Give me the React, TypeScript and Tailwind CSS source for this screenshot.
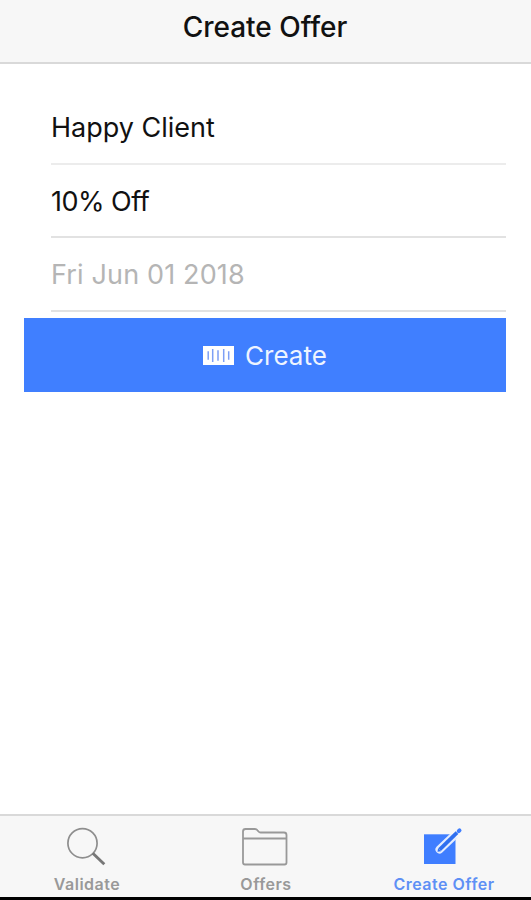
import type { ReactNode } from "react";
import clsx from "clsx";

type TabProps = {
  label: string;
  icon: ReactNode;
  active?: boolean;
  className?: string;
};

function SearchIcon() {
  return (
    <svg width="44" height="42" viewBox="0 0 44 42" fill="none">
      <circle cx="17.500" cy="18.200" r="14.600" stroke="#8e8e8e" strokeWidth="1.700" />
      <path d="M27.800 28.200l11.500 11" stroke="#777" strokeWidth="2.900" />
    </svg>
  );
}

function FolderIcon() {
  return (
    <svg
      width="50"
      height="42"
      viewBox="0 0 50 42"
      fill="none"
      stroke="#999"
      strokeWidth="1.800"
      strokeLinejoin="round"
    >
      <path d="M2 37.500V6.500q0-2.500 2.500-2.500h9.500q1.500 0 2.500 1.300l1 1.200q.8 1 2 1h23.500q2.500 0 2.500 2.500V37.500q0 2-2 2h-39.500Q2 39.500 2 37.500z" />
      <path d="M2 13.500h43.500" />
    </svg>
  );
}

function ComposeIcon() {
  return (
    <svg width="44" height="42" viewBox="0 0 44 42">
      <path d="M2 9.300h31.500V39H2z" fill="#3f7eff" />
      <path
        d="M17.500 24.500L37 6"
        stroke="#e4edff"
        strokeWidth="8"
        strokeLinecap="round"
      />
      <path d="M28 0h16v12.500h-10.500v-3.200H28z" fill="#f7f7f7" />
      <path d="M17.600 24.600L35 7.700" stroke="#2f70f0" strokeWidth="3.800" strokeLinecap="butt" />
      <path d="M15.500 26.800l.6-3.500 3 2.900z" fill="#2f70f0" />
      <path d="M36.700 6.100l.8-.8" stroke="#3f7eff" strokeWidth="4" strokeLinecap="round" />
    </svg>
  );
}

function BarcodeIcon() {
  return (
    <svg width="31" height="19" viewBox="0 0 31 19">
      <path d="M0 0h31v19H0z" fill="#fff" />
      <path
        d="M5.200 5.200v8.600M9.700 3v13M15 4.200v10.600M20.700 3v13M25.700 5.200v8.600"
        stroke="#7d9ff5"
        strokeWidth="1.500"
      />
    </svg>
  );
}

function Tab({ label, icon, active, className }: TabProps) {
  return (
    <button
      type="button"
      className={clsx(
        "flex flex-1 flex-col items-center pt-[9px] font-semibold",
        active ? "text-[#5e90f5]" : "text-[#999]",
        className,
      )}
    >
      {icon}
      <span className="mt-[7px] text-[16px] leading-[20px] tracking-[0.5px] whitespace-nowrap">
        {label}
      </span>
    </button>
  );
}

export default function App() {
  return (
    <div className="flex h-[900px] w-[531px] flex-col bg-white font-['Inter',sans-serif] text-black">
      <header className="flex h-[64px] shrink-0 justify-center border-b-2 border-[#d9d9d9] bg-[#f7f7f7] pt-[9px]">
        <h1 className="pr-[1px] text-[28px] leading-[37px] font-medium text-[#111]">
          Create Offer
        </h1>
      </header>

      <main className="flex-1 pt-[27px] pr-[25px] pl-[24px]">
        <div className="pl-[27px] text-[27px] text-[#111]">
          <div className="flex h-[74px] items-center border-b-2 border-[#ececec] pt-[2px]">
            Happy Client
          </div>
          <div className="flex h-[73px] items-center border-b-2 border-[#e2e2e2] pt-[3px] tracking-[-0.5px]">
            10% Off
          </div>
          <div className="flex h-[74px] items-center border-b-2 border-[#e2e2e2] pt-[2px] tracking-[0.15px] text-[#b5b5b5]">
            Fri Jun 01 2018
          </div>
        </div>
        <button
          type="button"
          className="mt-[6px] flex h-[74px] w-full items-center justify-center gap-[11px] bg-[#407fff] text-[26px] text-[#eef4ff]"
        >
          <BarcodeIcon />
          Create
        </button>
      </main>

      <nav className="flex h-[86px] shrink-0 border-t-2 border-b-3 border-t-[#d9d9d9] border-b-black bg-[#f7f7f7]">
        <Tab label="Validate" icon={<SearchIcon />} className="pr-[5px]" />
        <Tab label="Offers" icon={<FolderIcon />} className="pr-[2px]" />
        <Tab label="Create Offer" icon={<ComposeIcon />} active className="pl-[2px]" />
      </nav>
    </div>
  );
}
